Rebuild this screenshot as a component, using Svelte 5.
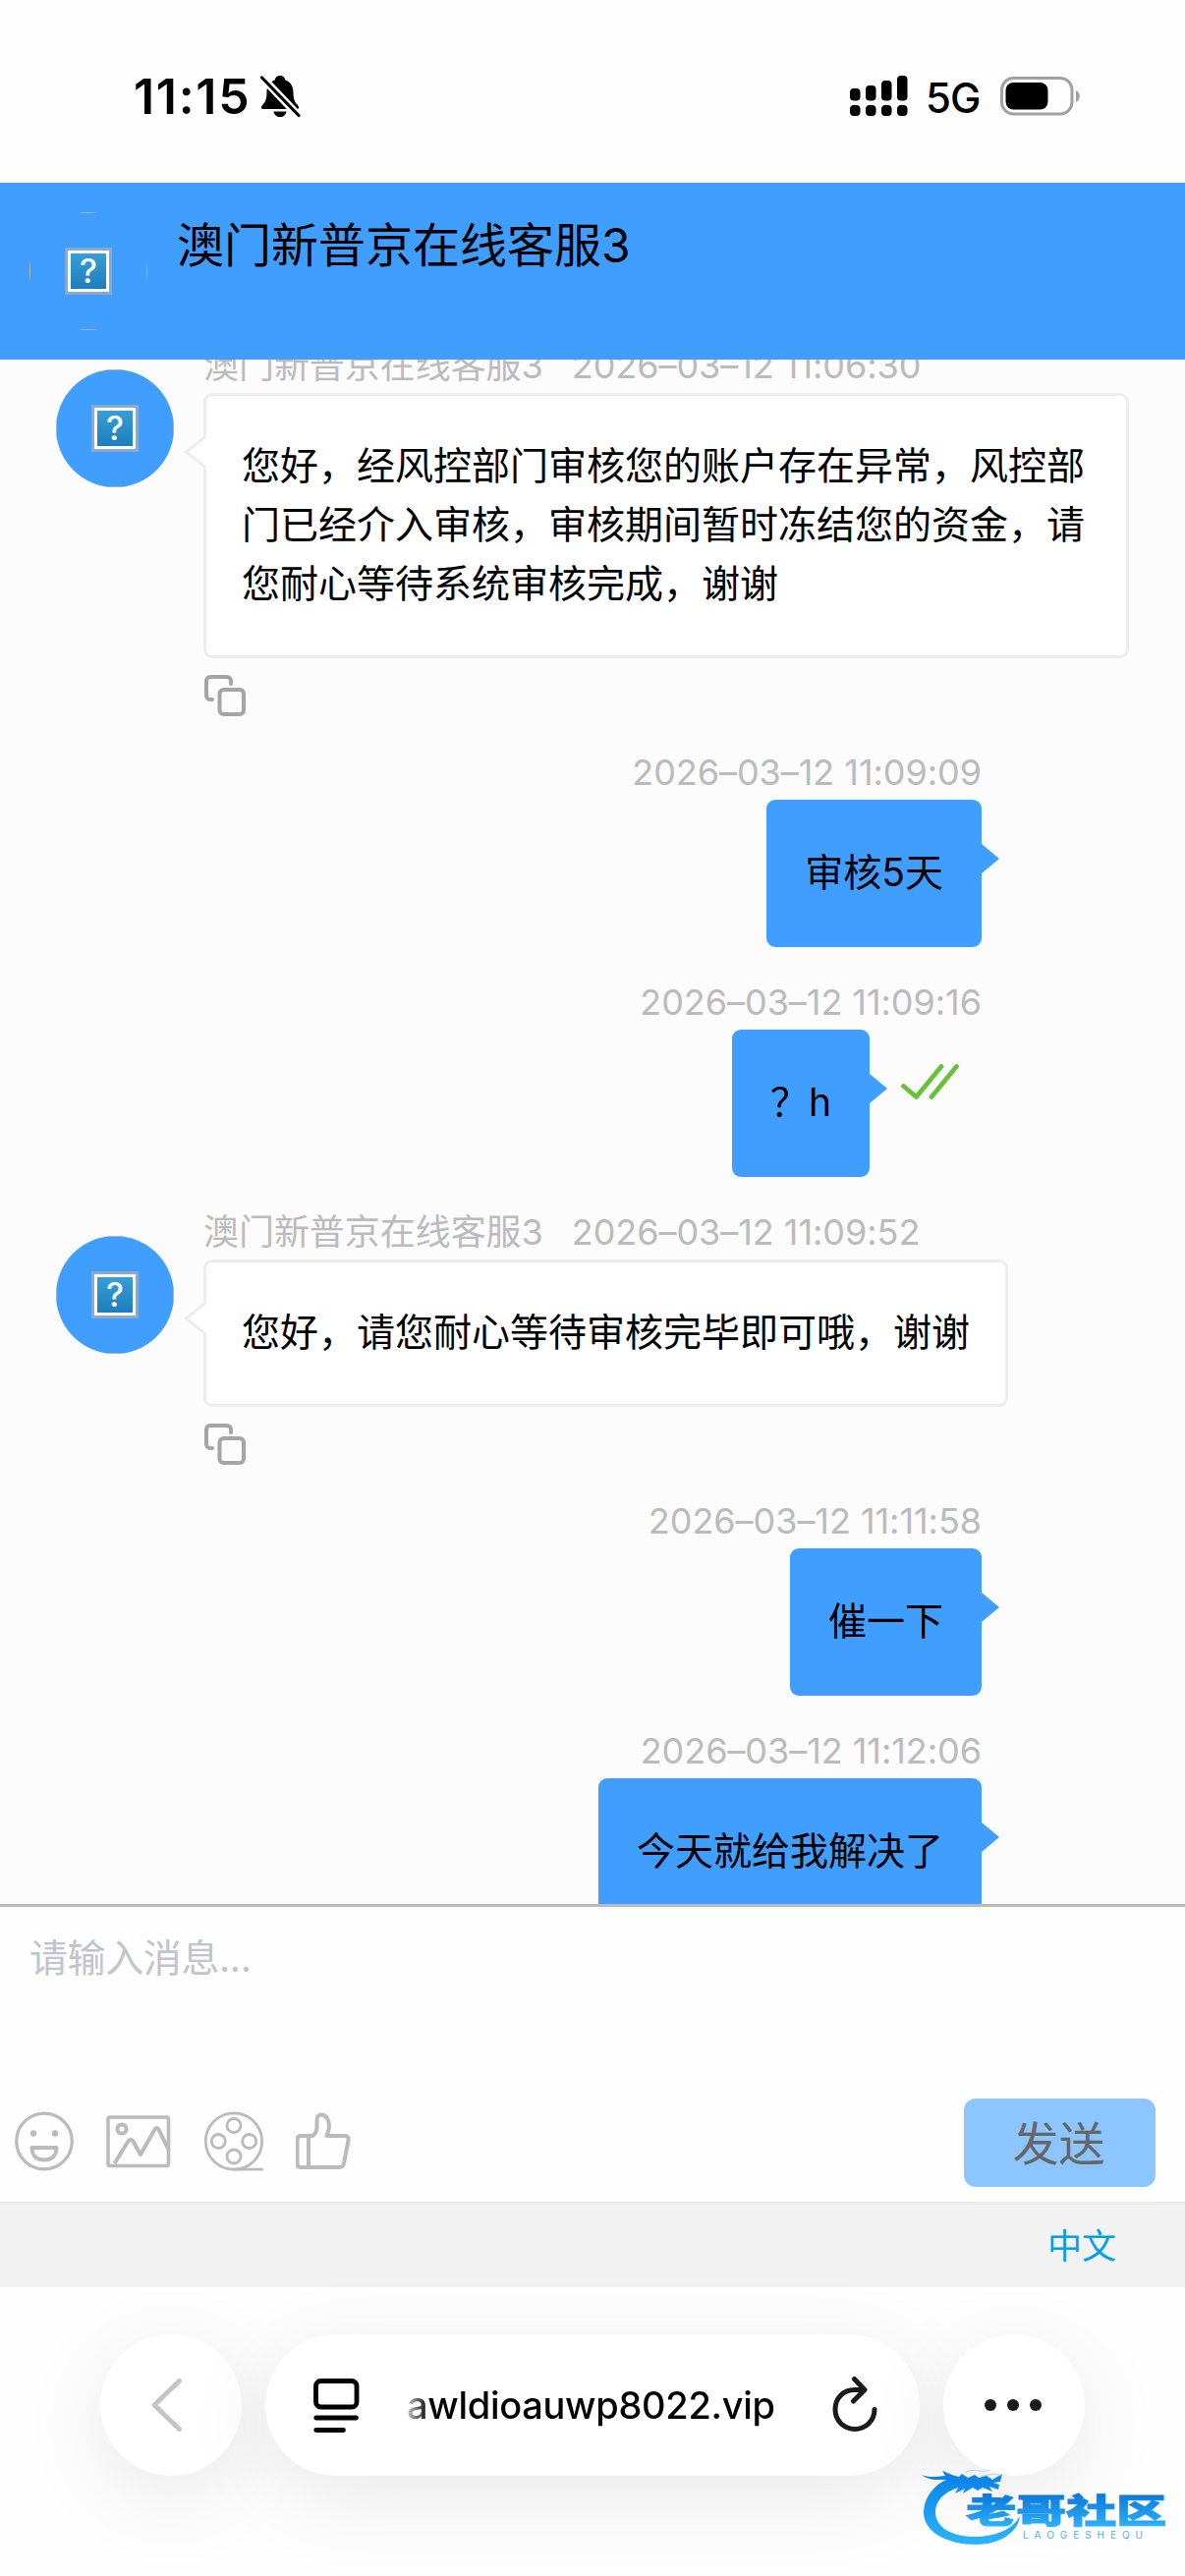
<script lang="ts">
	interface Message {
		id: number;
		from: 'agent' | 'user';
		time: string;
		text: string;
		read?: boolean;
	}

	const agentName = '澳门新普京在线客服3';

	const messages: Message[] = [
		{
			id: 1,
			from: 'agent',
			time: '2026–03–12 11:06:30',
			text: '您好，经风控部门审核您的账户存在异常，风控部门已经介入审核，审核期间暂时冻结您的资金，请您耐心等待系统审核完成，谢谢'
		},
		{ id: 2, from: 'user', time: '2026–03–12 11:09:09', text: '审核5天' },
		{ id: 3, from: 'user', time: '2026–03–12 11:09:16', text: '？h', read: true },
		{ id: 4, from: 'agent', time: '2026–03–12 11:09:52', text: '您好，请您耐心等待审核完毕即可哦，谢谢' },
		{ id: 5, from: 'user', time: '2026–03–12 11:11:58', text: '催一下' },
		{ id: 6, from: 'user', time: '2026–03–12 11:12:06', text: '今天就给我解决了' }
	];

	const signalBars = [
		{ x: 0, top: 13 },
		{ x: 16, top: 10 },
		{ x: 32, top: 5 },
		{ x: 48, top: 0 }
	];
</script>

{#snippet avatar()}
	<div class="avatar">
		<div class="broken"><span>?</span></div>
	</div>
{/snippet}

<div class="screen">
	<div class="status-bar">
		<div class="status-left">
			<span class="clock">11:15</span>
			<svg class="bell" width="42" height="44" viewBox="0 0 42 44">
				<path d="M21 1C24 1 26 3 26.300 5.500C32 7.500 34.500 12 34.500 18C34.500 25 36 28 39 31C41 33.500 40 35 38 35H4C2 35 1 33.500 3 31C6 28 7.500 25 7.500 18C7.500 12 10 7.500 15.700 5.500C16 3 18 1 21 1Z" fill="#000" />
				<path d="M14.500 37.500H27.500C27 41 24.500 43 21 43S15 41 14.500 37.500Z" fill="#000" />
				<path d="M2 2L40 42" stroke="#fff" stroke-width="8" />
				<path d="M2.500 3L40 41.500" stroke="#000" stroke-width="3.200" stroke-linecap="round" />
			</svg>
		</div>
		<div class="status-right">
			<svg class="signal" width="59" height="42" viewBox="0 0 59 42">
				{#each signalBars as bar (bar.x)}
					<rect x={bar.x} y={bar.top} width="10.500" height={25.5 - bar.top} rx="4" />
					<rect x={bar.x} y="30" width="10.500" height="11" rx="4" />
				{/each}
			</svg>
			<span class="network">5G</span>
			<svg width="82" height="40" viewBox="0 0 82 40">
				<rect x="1.500" y="1.500" width="71.500" height="36.500" rx="12" fill="none" stroke="#a1a1a1" stroke-width="3" />
				<rect x="5.500" y="6" width="43" height="27.500" rx="8" />
				<path d="M77 14C82 16 82 24 77 26Z" fill="#a1a1a1" />
			</svg>
		</div>
	</div>

	<header class="chat-header">
		{@render avatar()}
		<h1>{agentName}</h1>
	</header>

	<main class="chat">
		{#each messages as msg (msg.id)}
			{#if msg.from === 'agent'}
				<div class="message agent">
					{@render avatar()}
					<div class="body">
						<div class="meta"><span>{agentName}</span><span>{msg.time}</span></div>
						<div class="bubble">
							{msg.text}
							<svg class="tail" width="25" height="36" viewBox="0 0 25 36">
								<path d="M25 1L2 18L25 35Z" fill="#fff" />
								<path d="M22.500 2L2.500 18L22.500 34" fill="none" stroke="#ededed" stroke-width="3" />
							</svg>
						</div>
						<svg class="copy" width="42" height="42" viewBox="0 0 42 42">
							<path d="M27 9V6a4 4 0 0 0-4-4H6a4 4 0 0 0-4 4V21a4 4 0 0 0 4 4H8" />
							<rect x="15.500" y="15" width="24.500" height="25" rx="4" />
						</svg>
					</div>
				</div>
			{:else}
				<div class="message user">
					<div class="meta"><span>{msg.time}</span></div>
					<div class="row">
						<div class="bubble">{msg.text}</div>
						{#if msg.read}
							<svg class="read" width="59" height="36" viewBox="0 0 59 36">
								<path d="M2.500 22.500L15.500 33.500L41 2.500M31 33.500L56.500 2.500" />
							</svg>
						{/if}
					</div>
				</div>
			{/if}
		{/each}
	</main>

	<section class="composer">
		<textarea placeholder="请输入消息..."></textarea>
		<div class="toolbar">
			<div class="tools">
				<svg width="60" height="61" viewBox="0 0 60 61">
					<circle cx="30" cy="30.500" r="28.300" stroke-width="3.200" />
					<circle cx="19" cy="22.500" r="3.200" class="solid" />
					<circle cx="41" cy="22.500" r="3.200" class="solid" />
					<path d="M17.500 37H42.500C42.500 45.500 37 49.500 30 49.500S17.500 45.500 17.500 37Z" />
				</svg>
				<svg width="66" height="61" viewBox="0 0 66 61">
					<rect x="2" y="6" width="61.500" height="49.500" rx="2" stroke-width="3.600" />
					<circle cx="16" cy="18" r="4.600" />
					<path d="M8.500 53L22.500 30.500Q25 27 27.500 30.500L35 44L49.500 18.500Q51.500 15 53.500 18.500L64 40" />
				</svg>
				<svg width="61" height="61" viewBox="0 0 61 61" stroke-width="2.800">
					<circle cx="31" cy="30.500" r="28.700" />
					<circle cx="31" cy="14.500" r="7" />
					<circle cx="15.300" cy="30.500" r="7" />
					<circle cx="46.700" cy="30.500" r="7" />
					<circle cx="31" cy="46" r="7" />
					<path d="M31 59.200H59.500" stroke-linecap="round" />
				</svg>
				<svg width="57" height="61" viewBox="0 0 57 61">
					<path d="M13 25H17C20 23 21.500 20 21.500 16V10C21.500 5 23 3.500 26 3.500C31 3.500 34 9 34 15C34 19 32.500 22 31.500 25H50C53 25 54 27 53.500 29.500L49 53C48.500 56 47 57 44.500 57H5C2.500 57 1.500 56 1.500 53.500V29C1.500 26 3 25 5.500 25H13V57" />
				</svg>
			</div>
			<button class="send" disabled>发送</button>
		</div>
	</section>

	<div class="language">中文</div>

	<nav class="browser-bar">
		<div class="glass">
			<svg width="34" height="56" viewBox="0 0 34 56">
				<path d="M29.500 3.500L4 28L29.500 52.500" fill="none" stroke="#c5c5c7" stroke-width="5" stroke-linecap="round" stroke-linejoin="round" />
			</svg>
		</div>
		<div class="glass address">
			<svg width="47" height="56" viewBox="0 0 47 56" fill="none" stroke="#000" stroke-width="4.800" stroke-linecap="round">
				<rect x="2.500" y="3.500" width="41.500" height="26.500" rx="5" />
				<path d="M2.700 41H43.500M2.700 53.500H30.500" />
			</svg>
			<span class="url">awldioauwp8022.vip</span>
			<svg class="reload" width="46" height="60" viewBox="0 0 46 60" fill="none" stroke="#1a1a1a" stroke-width="5" stroke-linecap="round" stroke-linejoin="round">
				<path d="M22.500 3.500L33 14.500L21.500 26" />
				<path d="M32 14.500H23C11 14.500 3 23 3 34.500S12 54.500 23 54.500S43 46 43 34.500" />
			</svg>
		</div>
		<div class="glass more">
			<svg width="60" height="14" viewBox="0 0 60 14" fill="#1a1a1a">
				<circle cx="7" cy="7" r="6" />
				<circle cx="30" cy="7" r="6" />
				<circle cx="53" cy="7" r="6" />
			</svg>
		</div>
	</nav>

	<svg class="watermark" width="252" height="86" viewBox="0 0 252 86">
		<defs>
			<linearGradient id="wm" gradientUnits="userSpaceOnUse" x1="0" y1="29" x2="0" y2="62">
				<stop offset="0" stop-color="#0b78dc" />
				<stop offset="1" stop-color="#2cb2f8" />
			</linearGradient>
			<linearGradient id="ring" gradientUnits="userSpaceOnUse" x1="0" y1="8" x2="0" y2="80">
				<stop offset="0" stop-color="#0a80e8" />
				<stop offset="1" stop-color="#2ab6fa" />
			</linearGradient>
		</defs>
		<path fill="url(#ring)" d="M0 9C7 12 15 11 24 10L21 5C27 7 32 10 38 11L41 8L47 12L54 9L58 12L66 10L72 14L82 8L80 16L73 17L79 19L78 24L69 21L72 26L62 22L57 25L52 22L42 28L44 23L34 28L37 22C22 27 14 36 14 47C14 62 30 72 54 72C76 72 93 64 100 51C98 68 79 80 56 80C25 80 2 67 2 47C2 33 12 20 25 14C17 14 7 15 0 9Z" />
		<path d="M44 7C52 1 60 8 70 4M60 10C68 10 74 6 81 10" fill="none" stroke="#8cc8f3" stroke-width="1" opacity="0.7" />
		<text class="wm-name" x="45" y="58" textLength="204" lengthAdjust="spacingAndGlyphs" fill="url(#wm)" stroke="url(#wm)">老哥社区</text>
		<text class="wm-latin" x="103" y="73.500" textLength="122">LAOGESHEQU</text>
	</svg>
</div>

<style>
	:global(body) {
		margin: 0;
		background: #fefefe;
	}

	.screen {
		position: relative;
		display: flex;
		flex-direction: column;
		width: 1206px;
		height: 2622px;
		overflow: hidden;
		background: #fefefe;
		color: #000;
		font-family: Inter, 'Noto Sans CJK SC', sans-serif;
	}

	svg {
		display: block;
		flex: none;
	}

	.status-bar {
		display: flex;
		justify-content: space-between;
		box-sizing: border-box;
		height: 186px;
		padding: 68px 106px 0 136px;
	}

	.status-left,
	.status-right {
		display: flex;
		align-items: center;
		height: 60px;
	}

	.clock {
		width: 128px;
		font-size: 50px;
		font-weight: 600;
		letter-spacing: 1.7px;
	}

	.network {
		width: 58px;
		margin: 2px 18px 0 18px;
		font-size: 42px;
		font-weight: 450;
		letter-spacing: -1px;
	}

	.chat-header {
		display: flex;
		box-sizing: border-box;
		height: 180px;
		padding: 30px;
		gap: 30px;
		background: #409eff;
	}

	h1 {
		margin: 0;
		font-size: 48px;
		font-weight: 400;
		line-height: 68px;
	}

	.avatar {
		position: relative;
		display: flex;
		flex: none;
		align-items: center;
		justify-content: center;
		width: 120px;
		height: 120px;
		border-radius: 50%;
		background: #409eff;
		overflow: hidden;
	}

	.avatar::after {
		content: '';
		position: absolute;
		inset: 0;
		border: 1px solid #b4b4b4;
	}

	.broken {
		display: flex;
		align-items: center;
		justify-content: center;
		box-sizing: border-box;
		width: 48px;
		height: 48px;
		border: 3px solid #8aa9cf;
		outline: 3px solid #fff;
		outline-offset: -6px;
		background: linear-gradient(#37a3d8, #1d7ab9);
		color: #fff;
		font-size: 34px;
		font-weight: 500;
		line-height: 42px;
	}

	.chat {
		height: 1572px;
		background: #fcfcfc;
		overflow: hidden;
	}

	.message {
		margin-top: 35px;
	}

	/* the list is scrolled, so the first row starts under the header */
	.message:first-child {
		margin-top: -15px;
	}

	.meta {
		display: flex;
		gap: 29px;
		height: 42px;
		margin-bottom: 7px;
		color: #bbb;
		font-size: 36px;
		font-weight: 400;
		line-height: 42px;
		letter-spacing: -0.05px;
		white-space: nowrap;
	}

	.bubble {
		position: relative;
		box-sizing: border-box;
		width: fit-content;
		border-radius: 9px;
		font-size: 39px;
		line-height: 60px;
	}

	.agent {
		display: flex;
		gap: 30px;
		padding-left: 57px;
	}

	.agent .avatar {
		margin-top: 25px;
	}

	.agent .bubble {
		max-width: 942px;
		padding: 41px 36px 43px;
		border: 3px solid #ededed;
		background: #fff;
	}

	.tail {
		position: absolute;
		top: 39px;
		left: -23px;
	}

	.copy {
		margin: 17px 0 1px 1px;
		fill: none;
		stroke: #a5a5a5;
		stroke-width: 4;
		stroke-linecap: round;
	}

	.user {
		display: flex;
		flex-direction: column;
		align-items: flex-end;
		padding-right: 207px;
	}

	.user .row {
		display: flex;
	}

	.user .bubble {
		padding: 44px 39px 46px;
		background: #409eff;
	}

	.user .bubble::after {
		content: '';
		position: absolute;
		top: 45px;
		left: 100%;
		border: 15px solid transparent;
		border-left: 18px solid #409eff;
		border-right: 0;
	}

	.read {
		margin: 35px 23px 0 32px;
		fill: none;
		stroke: #67c23a;
		stroke-width: 4.8;
		stroke-linecap: round;
		stroke-linejoin: round;
	}

	.composer {
		display: flex;
		flex-direction: column;
		justify-content: space-between;
		box-sizing: border-box;
		height: 306px;
		padding-bottom: 15px;
		border-top: 3px solid #bababa;
		border-bottom: 3px solid #ebebeb;
	}

	textarea {
		height: 150px;
		padding: 22px 30px;
		box-sizing: border-box;
		border: 0;
		outline: 0;
		resize: none;
		background: none;
		font: inherit;
		font-size: 39px;
		line-height: 60px;
		letter-spacing: -0.4px;
	}

	textarea::placeholder {
		color: #c0c4cc;
		opacity: 1;
	}

	.toolbar {
		display: flex;
		align-items: center;
		justify-content: space-between;
		padding: 0 30px 0 15px;
	}

	.tools {
		display: flex;
		gap: 33px;
		padding-bottom: 3px;
		fill: none;
		stroke: #bbb;
		stroke-width: 4;
		stroke-linejoin: round;
	}

	.tools .solid {
		fill: #bbb;
		stroke: none;
	}

	.send {
		width: 195px;
		height: 90px;
		padding: 0 2px 6px 0;
		border: 0;
		border-radius: 12px;
		background: #8cc5ff;
		color: #666;
		font: inherit;
		font-size: 47px;
	}

	.language {
		height: 84px;
		padding-right: 70px;
		background: #f2f2f2;
		color: #009fe8;
		font-size: 35px;
		line-height: 84px;
		text-align: right;
	}

	.browser-bar {
		display: flex;
		gap: 24px;
		padding: 48px 102px 102px;
	}

	.glass {
		display: flex;
		flex: none;
		align-items: center;
		justify-content: center;
		width: 144px;
		height: 144px;
		border-radius: 72px;
		background: #fff;
		box-shadow: 0 20px 90px rgba(0, 0, 0, 0.09);
	}

	.glass:first-child {
		box-sizing: border-box;
		padding-right: 9px;
	}

	.address {
		box-sizing: border-box;
		width: 666px;
		padding: 0 43px 0 49px;
	}

	.more {
		box-sizing: border-box;
		padding-right: 2px;
	}

	.reload {
		margin-left: auto;
	}

	.url {
		margin-left: 48px;
		font-size: 38px;
		font-weight: 500;
		letter-spacing: -0.3px;
		background: linear-gradient(90deg, #ccc, #000 22px);
		background-clip: text;
		color: transparent;
	}

	/* community logo over the bottom right corner */
	.watermark {
		position: absolute;
		right: 16px;
		bottom: 26px;
	}

	.wm-name {
		font-size: 34px;
		font-weight: 900;
		stroke-width: 1;
	}

	.wm-latin {
		fill: #56b0ee;
		font-size: 10px;
	}
</style>
